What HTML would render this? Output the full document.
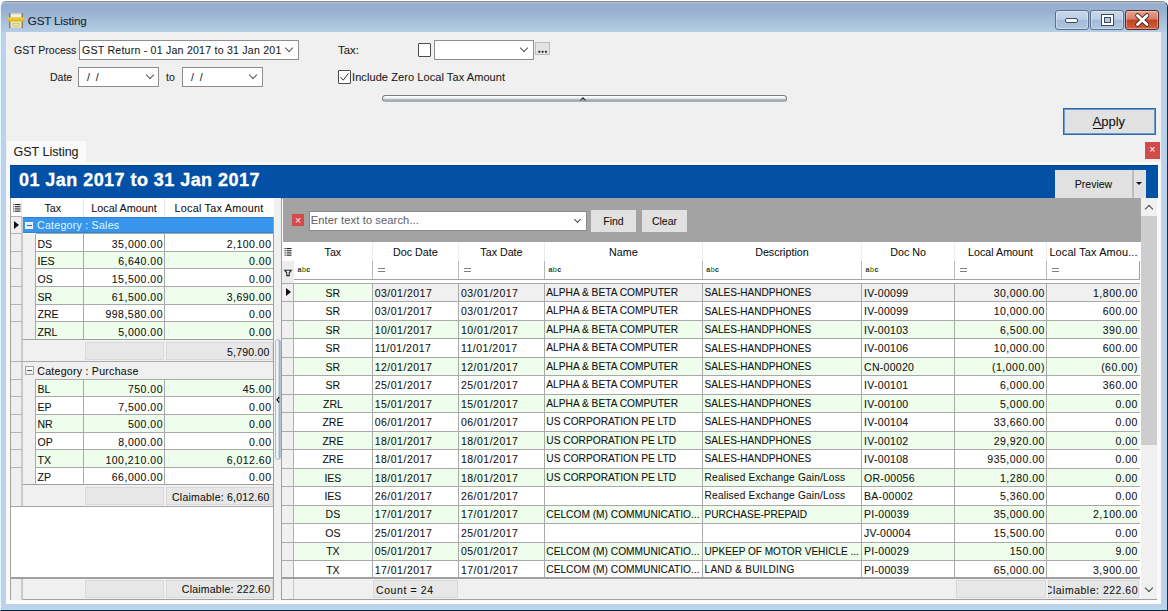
<!DOCTYPE html>
<html><head><meta charset="utf-8">
<style>
*{box-sizing:border-box;margin:0;padding:0}
html,body{width:1168px;height:611px;overflow:hidden;background:#fff}
body{position:relative;font-family:"Liberation Sans",sans-serif;font-size:10.5px;color:#1a1a1a}
.a{position:absolute}
.t{position:absolute;white-space:nowrap;line-height:1;-webkit-text-stroke:0.08px currentColor}
#frame{left:0;top:0.6px;width:1168px;height:610.4px;background:#bcd2ea;border-top:1.5px solid #868c94;border-right:1px solid #1c2c3c;border-bottom:1px solid #10202c;border-left:1px solid #e6f6ff;border-radius:6px 6px 0 0}
#title{left:1px;top:2px;width:1166px;height:30px;border-radius:5px 5px 0 0;background:linear-gradient(#b8c0d0 0px,#96aecd 2.5px,#9ab3d1 35%,#a6bdd8 60%,#b5cde5 100%)}
#client{left:6px;top:32px;width:1155px;height:571.5px;background:#f0f0f0}
.cb{position:absolute;background:#fff;border:1px solid #8e8e8e}
.chev{position:absolute;width:6px;height:6px;border-right:1px solid #555;border-bottom:1px solid #555;transform:rotate(45deg)}
.wb{position:absolute;top:10px;height:20px;border:1px solid #5a708e;border-radius:3px;background:linear-gradient(#c8d8ea 0%,#bcd0e6 45%,#a4bcd8 52%,#b0c6e0 100%);box-shadow:inset 0 0 0 1px rgba(255,255,255,0.35)}
</style></head><body>
<div id="frame" class="a"></div>
<div id="title" class="a"></div>
<!-- printer icon -->
<svg class="a" style="left:7px;top:12px" width="18" height="17" viewBox="0 0 18 17"><rect x="2" y="1" width="1.6" height="15" fill="#7c7c74"/><rect x="14.4" y="1" width="1.6" height="15" fill="#7c7c74"/><rect x="3.6" y="1.5" width="10.8" height="4" fill="#f6f2e0"/><rect x="3.6" y="1.5" width="10.8" height="0.8" fill="#c8c4b0"/><rect x="0.7" y="5.6" width="16.6" height="4" rx="1" fill="#e4b820"/><rect x="0.7" y="5.6" width="16.6" height="1.6" rx="0.8" fill="#f4d040"/><rect x="3.6" y="9.6" width="10.8" height="6" fill="#f2eab0"/><rect x="6" y="11.5" width="6" height="2.5" fill="none" stroke="#c8b860" stroke-width="0.8"/></svg>
<div class="t" style="left:27.8px;top:15.3px;font-size:11.6px;color:#142236;letter-spacing:-0.15px">GST Listing</div>
<!-- window buttons -->
<div class="wb" style="left:1055px;width:34px"><div class="a" style="left:9px;top:7px;width:13px;height:5px;background:#fff;border:1px solid #3a4a5e;border-radius:2px"></div></div>
<div class="wb" style="left:1090px;width:34px"><div class="a" style="left:10px;top:3px;width:13px;height:12px;background:#fff;border:1px solid #3a4a5e"></div><div class="a" style="left:13px;top:6px;width:7px;height:6px;background:#b7c9de;border:1px solid #3a4a5e"></div></div>
<div class="wb" style="left:1125px;width:34px;border-color:#5a2a20;background:linear-gradient(#eaa090 0%,#d8806a 45%,#c8401c 50%,#d06040 100%)"><svg class="a" style="left:0;top:0" width="33" height="19" viewBox="0 0 33 19"><path d="M11.5 4.5 L21 13.5 M21 4.5 L11.5 13.5" stroke="#4a2a24" stroke-width="4.6" stroke-linecap="round"/><path d="M11.5 4.5 L21 13.5 M21 4.5 L11.5 13.5" stroke="#fff" stroke-width="2.8" stroke-linecap="round"/></svg></div>

<div class="a" style="left:1px;top:607.6px;width:1166px;height:1.6px;background:#a8def4"></div><div id="client" class="a"></div><div class="a" style="left:6px;top:31.6px;width:1155px;height:1px;background:#eef4fa"></div>

<!-- top form -->
<div class="t" style="left:14px;top:45px">GST Process</div>
<div class="cb" style="left:79px;top:40px;width:220px;height:20px"><div class="t" style="left:2px;top:4px;font-size:10.6px;letter-spacing:0.22px">GST Return - 01 Jan 2017 to 31 Jan 201</div><div class="chev" style="left:206px;top:4px"></div></div>
<div class="t" style="left:50px;top:72px">Date</div>
<div class="cb" style="left:78px;top:67px;width:81px;height:20px"><div class="t" style="left:8px;top:4px">/ &nbsp;/</div><div class="chev" style="left:68px;top:4px"></div></div>
<div class="t" style="left:166px;top:72px">to</div>
<div class="cb" style="left:182px;top:67px;width:81px;height:20px"><div class="t" style="left:8px;top:4px">/ &nbsp;/</div><div class="chev" style="left:67px;top:4px"></div></div>

<div class="t" style="left:338px;top:44.5px;font-size:11.4px">Tax:</div>
<div class="a" style="left:417.5px;top:43px;width:13.5px;height:14px;background:#fff;border:1px solid #4c4c4c;border-radius:1px"></div>
<div class="cb" style="left:434px;top:40px;width:100px;height:20px"><div class="chev" style="left:86px;top:4px"></div></div>
<div class="a" style="left:535.2px;top:41.6px;width:15px;height:13.2px;background:#e3e3e3;border:1px solid #bdbdbd"><svg class="a" style="left:0;top:0" width="13" height="12" viewBox="0 0 13 12"><g fill="#111"><circle cx="3.3" cy="8.7" r="1.05"/><circle cx="6.6" cy="8.7" r="1.05"/><circle cx="9.9" cy="8.7" r="1.05"/></g></svg></div>

<div class="a" style="left:338px;top:70px;width:13px;height:13.5px;background:#fff;border:1px solid #4c4c4c;border-radius:1px"></div>
<svg class="a" style="left:338px;top:70px" width="13" height="14" viewBox="0 0 13 14"><path d="M2.6 7.2 L5.2 10.2 L10.4 3.4" fill="none" stroke="#333" stroke-width="1"/></svg>
<div class="t" style="left:352px;top:72px;font-size:11px;letter-spacing:0.08px">Include Zero Local Tax Amount</div>

<div class="a" style="left:381.5px;top:95px;width:405px;height:7px;border:1px solid #7c7c7c;border-bottom-color:#a4b0ba;border-radius:3.5px;background:linear-gradient(#ffffff 0%,#f2f6fa 40%,#b4c0ca 65%,#94a2ae 100%)"></div>
<div class="chev" style="left:581px;top:98px;width:4px;height:4px;transform:rotate(225deg);border-color:#222"></div>

<div class="a" style="left:1063px;top:108px;width:93px;height:27px;background:#e1e1e1;border:1px solid #2a68aa;box-shadow:inset 0 0 0 1px #6e9fd0"><div class="t" style="left:28.5px;top:6px;font-size:13px;color:#111">Apply</div><div class="a" style="left:28.5px;top:19px;width:9px;height:1px;background:#111"></div></div>

<div class="a" style="left:6.00px;top:162.00px;width:1155.00px;height:441.50px;background:#fafafa"></div>
<div class="a" style="left:7.00px;top:140.50px;width:79.00px;height:22.00px;background:#fafafa"></div>
<div class="t" style="top:146.22px;font-size:12.5px;color:#222;left:13.50px;">GST Listing</div>
<div class="a" style="left:1145.00px;top:142.00px;width:15.00px;height:17.00px;background:#d24a4a"></div>
<div class="t" style="top:145.34px;font-size:10px;color:#fff;left:952.50px;width:400px;text-align:center;">×</div>
<div class="a" style="left:10.00px;top:165.00px;width:1147.50px;height:33.00px;background:#0351a6;border-top:1px solid #02428c"></div>
<div class="t" style="top:171.06px;font-size:18px;color:#fff;left:19.00px;font-weight:bold;letter-spacing:0.45px;-webkit-text-stroke:0.35px #fff">01 Jan 2017 to 31 Jan 2017</div>
<div class="a" style="left:1054.70px;top:170.00px;width:77.50px;height:28.00px;background:#e1e1e1"></div>
<div class="a" style="left:1132.20px;top:170.00px;width:1.50px;height:28.00px;background:#bdbdbd"></div>
<div class="a" style="left:1133.70px;top:170.00px;width:12.30px;height:28.00px;background:#e1e1e1"></div>
<div class="t" style="top:179.11px;font-size:10.5px;color:#111;left:893.50px;width:400px;text-align:center;">Preview</div>
<div class="a" style="left:1136.2px;top:182.3px;width:0;height:0;border-left:3.6px solid transparent;border-right:3.6px solid transparent;border-top:3.8px solid #111"></div>
<div class="a" style="left:10.00px;top:198.00px;width:264.00px;height:402.00px;background:#fff;border:1px solid #a0a0a0;border-top:none"></div>
<div class="a" style="left:10.50px;top:198.00px;width:263.00px;height:18.60px;background:#fff"></div>
<div class="a" style="left:21.30px;top:198.00px;width:0.90px;height:18.60px;background:#e6e6e6"></div>
<div class="a" style="left:83.00px;top:198.00px;width:0.90px;height:18.60px;background:#e6e6e6"></div>
<div class="a" style="left:164.20px;top:198.00px;width:0.90px;height:18.60px;background:#e6e6e6"></div>
<div class="t" style="top:202.86px;font-size:10.8px;color:#111;left:-147.20px;width:400px;text-align:center;">Tax</div>
<div class="t" style="top:202.86px;font-size:10.8px;color:#111;left:-76.00px;width:400px;text-align:center;">Local Amount</div>
<div class="t" style="top:202.86px;font-size:10.8px;color:#111;left:19.00px;width:400px;text-align:center;letter-spacing:0.25px">Local Tax Amount</div>
<div class="a" style="left:10.60px;top:216.60px;width:11.00px;height:383.00px;background:#efefef"></div>
<div class="a" style="left:21.20px;top:216.60px;width:1.40px;height:383.00px;background:#c9c9c9"></div>
<svg class="a" style="left:12px;top:202px" width="10" height="11" viewBox="0 0 10 11"><g fill="#222"><rect x="1.2" y="2" width="1.2" height="1.1"/><rect x="3" y="2" width="5.5" height="1.1"/><rect x="1.2" y="4.2" width="1.2" height="1.1"/><rect x="3" y="4.2" width="5.5" height="1.1"/><rect x="1.2" y="6.4" width="1.2" height="1.1"/><rect x="3" y="6.4" width="5.5" height="1.1"/><rect x="1.2" y="8.6" width="1.2" height="1.1"/><rect x="3" y="8.6" width="5.5" height="1.1"/></g></svg>
<div class="a" style="left:22.60px;top:216.60px;width:250.40px;height:16.90px;background:#3995ec;border-top:1px solid #2f82d4;border-bottom:1px solid #2f82d4"></div>
<div class="a" style="left:25.20px;top:221.90px;width:8.20px;height:7.50px;background:#dcecfb;border:1px solid #f4faff"></div>
<div class="a" style="left:26.80px;top:225.20px;width:5.00px;height:1.10px;background:#4a6a8a"></div>
<div class="t" style="top:220.23px;font-size:10.6px;color:#d2f6ff;left:37.00px;letter-spacing:0.25px">Category : Sales</div>
<div class="a" style="left:10.60px;top:216.15px;width:11.00px;height:0.90px;background:#b4b4b4"></div>
<div class="a" style="left:22.60px;top:233.50px;width:13.00px;height:127.68px;background:#f0f0f0"></div>
<div class="a" style="left:35.50px;top:233.50px;width:237.50px;height:17.68px;background:#fff"></div>
<div class="a" style="left:35.50px;top:233.05px;width:237.50px;height:0.90px;background:#a9a9a9"></div>
<div class="a" style="left:10.60px;top:233.05px;width:11.00px;height:0.90px;background:#b4b4b4"></div>
<div class="t" style="top:238.51px;font-size:10.5px;color:#111;left:37.50px;">DS</div>
<div class="t" style="top:238.51px;font-size:10.5px;color:#111;right:1005.50px;letter-spacing:0.5px;margin-right:-0.5px">35,000.00</div>
<div class="t" style="top:238.51px;font-size:10.5px;color:#111;right:897.00px;letter-spacing:0.5px;margin-right:-0.5px">2,100.00</div>
<div class="a" style="left:35.50px;top:251.18px;width:237.50px;height:17.68px;background:#eefdec"></div>
<div class="a" style="left:35.50px;top:250.73px;width:237.50px;height:0.90px;background:#a9a9a9"></div>
<div class="a" style="left:10.60px;top:250.73px;width:11.00px;height:0.90px;background:#b4b4b4"></div>
<div class="t" style="top:256.19px;font-size:10.5px;color:#111;left:37.50px;">IES</div>
<div class="t" style="top:256.19px;font-size:10.5px;color:#111;right:1005.50px;letter-spacing:0.5px;margin-right:-0.5px">6,640.00</div>
<div class="t" style="top:256.19px;font-size:10.5px;color:#111;right:897.00px;letter-spacing:0.5px;margin-right:-0.5px">0.00</div>
<div class="a" style="left:35.50px;top:268.86px;width:237.50px;height:17.68px;background:#fff"></div>
<div class="a" style="left:35.50px;top:268.41px;width:237.50px;height:0.90px;background:#a9a9a9"></div>
<div class="a" style="left:10.60px;top:268.41px;width:11.00px;height:0.90px;background:#b4b4b4"></div>
<div class="t" style="top:273.87px;font-size:10.5px;color:#111;left:37.50px;">OS</div>
<div class="t" style="top:273.87px;font-size:10.5px;color:#111;right:1005.50px;letter-spacing:0.5px;margin-right:-0.5px">15,500.00</div>
<div class="t" style="top:273.87px;font-size:10.5px;color:#111;right:897.00px;letter-spacing:0.5px;margin-right:-0.5px">0.00</div>
<div class="a" style="left:35.50px;top:286.54px;width:237.50px;height:17.68px;background:#eefdec"></div>
<div class="a" style="left:35.50px;top:286.09px;width:237.50px;height:0.90px;background:#a9a9a9"></div>
<div class="a" style="left:10.60px;top:286.09px;width:11.00px;height:0.90px;background:#b4b4b4"></div>
<div class="t" style="top:291.55px;font-size:10.5px;color:#111;left:37.50px;">SR</div>
<div class="t" style="top:291.55px;font-size:10.5px;color:#111;right:1005.50px;letter-spacing:0.5px;margin-right:-0.5px">61,500.00</div>
<div class="t" style="top:291.55px;font-size:10.5px;color:#111;right:897.00px;letter-spacing:0.5px;margin-right:-0.5px">3,690.00</div>
<div class="a" style="left:35.50px;top:304.22px;width:237.50px;height:17.68px;background:#fff"></div>
<div class="a" style="left:35.50px;top:303.77px;width:237.50px;height:0.90px;background:#a9a9a9"></div>
<div class="a" style="left:10.60px;top:303.77px;width:11.00px;height:0.90px;background:#b4b4b4"></div>
<div class="t" style="top:309.23px;font-size:10.5px;color:#111;left:37.50px;">ZRE</div>
<div class="t" style="top:309.23px;font-size:10.5px;color:#111;right:1005.50px;letter-spacing:0.5px;margin-right:-0.5px">998,580.00</div>
<div class="t" style="top:309.23px;font-size:10.5px;color:#111;right:897.00px;letter-spacing:0.5px;margin-right:-0.5px">0.00</div>
<div class="a" style="left:35.50px;top:321.90px;width:237.50px;height:17.68px;background:#eefdec"></div>
<div class="a" style="left:35.50px;top:321.45px;width:237.50px;height:0.90px;background:#a9a9a9"></div>
<div class="a" style="left:10.60px;top:321.45px;width:11.00px;height:0.90px;background:#b4b4b4"></div>
<div class="t" style="top:326.91px;font-size:10.5px;color:#111;left:37.50px;">ZRL</div>
<div class="t" style="top:326.91px;font-size:10.5px;color:#111;right:1005.50px;letter-spacing:0.5px;margin-right:-0.5px">5,000.00</div>
<div class="t" style="top:326.91px;font-size:10.5px;color:#111;right:897.00px;letter-spacing:0.5px;margin-right:-0.5px">0.00</div>
<div class="a" style="left:35.10px;top:233.50px;width:0.90px;height:106.08px;background:#a9a9a9"></div>
<div class="a" style="left:83.00px;top:233.50px;width:0.90px;height:106.08px;background:#a9a9a9"></div>
<div class="a" style="left:164.10px;top:233.50px;width:0.90px;height:106.08px;background:#a9a9a9"></div>
<div class="a" style="left:22.60px;top:339.08px;width:250.40px;height:1.10px;background:#a0a0a0"></div>
<div class="a" style="left:22.60px;top:340.18px;width:250.40px;height:21.00px;background:#f0f0f0"></div>
<div class="a" style="left:85.00px;top:341.78px;width:79.00px;height:18.40px;background:#e7e7e8;border:1px solid #d9d9d9"></div>
<div class="a" style="left:166.00px;top:341.78px;width:106.50px;height:18.40px;background:#e7e7e8;border:1px solid #d9d9d9"></div>
<div class="t" style="top:346.59px;font-size:10.5px;color:#111;right:898.60px;letter-spacing:0.22px;margin-right:-0.22px">5,790.00</div>
<div class="a" style="left:10.60px;top:360.68px;width:262.40px;height:1.00px;background:#a9a9a9"></div>
<div class="a" style="left:22.60px;top:361.68px;width:250.40px;height:17.50px;background:#f0f0f0"></div>
<div class="a" style="left:25.10px;top:366.18px;width:8.60px;height:8.40px;background:linear-gradient(#ffffff,#e8e8e8);border:1px solid #a4a4a4"></div>
<div class="a" style="left:27.00px;top:369.88px;width:4.80px;height:1.10px;background:#555"></div>
<div class="t" style="top:365.51px;font-size:10.6px;color:#111;left:37.30px;letter-spacing:0.25px">Category : Purchase</div>
<div class="a" style="left:10.60px;top:360.73px;width:11.00px;height:0.90px;background:#b4b4b4"></div>
<div class="a" style="left:22.60px;top:379.18px;width:13.00px;height:127.20px;background:#f0f0f0"></div>
<div class="a" style="left:35.50px;top:379.18px;width:237.50px;height:17.60px;background:#eefdec"></div>
<div class="a" style="left:35.50px;top:378.73px;width:237.50px;height:0.90px;background:#a9a9a9"></div>
<div class="a" style="left:10.60px;top:378.73px;width:11.00px;height:0.90px;background:#b4b4b4"></div>
<div class="t" style="top:384.19px;font-size:10.5px;color:#111;left:37.50px;">BL</div>
<div class="t" style="top:384.19px;font-size:10.5px;color:#111;right:1005.50px;letter-spacing:0.5px;margin-right:-0.5px">750.00</div>
<div class="t" style="top:384.19px;font-size:10.5px;color:#111;right:897.00px;letter-spacing:0.5px;margin-right:-0.5px">45.00</div>
<div class="a" style="left:35.50px;top:396.78px;width:237.50px;height:17.60px;background:#fff"></div>
<div class="a" style="left:35.50px;top:396.33px;width:237.50px;height:0.90px;background:#a9a9a9"></div>
<div class="a" style="left:10.60px;top:396.33px;width:11.00px;height:0.90px;background:#b4b4b4"></div>
<div class="t" style="top:401.79px;font-size:10.5px;color:#111;left:37.50px;">EP</div>
<div class="t" style="top:401.79px;font-size:10.5px;color:#111;right:1005.50px;letter-spacing:0.5px;margin-right:-0.5px">7,500.00</div>
<div class="t" style="top:401.79px;font-size:10.5px;color:#111;right:897.00px;letter-spacing:0.5px;margin-right:-0.5px">0.00</div>
<div class="a" style="left:35.50px;top:414.38px;width:237.50px;height:17.60px;background:#eefdec"></div>
<div class="a" style="left:35.50px;top:413.93px;width:237.50px;height:0.90px;background:#a9a9a9"></div>
<div class="a" style="left:10.60px;top:413.93px;width:11.00px;height:0.90px;background:#b4b4b4"></div>
<div class="t" style="top:419.39px;font-size:10.5px;color:#111;left:37.50px;">NR</div>
<div class="t" style="top:419.39px;font-size:10.5px;color:#111;right:1005.50px;letter-spacing:0.5px;margin-right:-0.5px">500.00</div>
<div class="t" style="top:419.39px;font-size:10.5px;color:#111;right:897.00px;letter-spacing:0.5px;margin-right:-0.5px">0.00</div>
<div class="a" style="left:35.50px;top:431.98px;width:237.50px;height:17.60px;background:#fff"></div>
<div class="a" style="left:35.50px;top:431.53px;width:237.50px;height:0.90px;background:#a9a9a9"></div>
<div class="a" style="left:10.60px;top:431.53px;width:11.00px;height:0.90px;background:#b4b4b4"></div>
<div class="t" style="top:436.99px;font-size:10.5px;color:#111;left:37.50px;">OP</div>
<div class="t" style="top:436.99px;font-size:10.5px;color:#111;right:1005.50px;letter-spacing:0.5px;margin-right:-0.5px">8,000.00</div>
<div class="t" style="top:436.99px;font-size:10.5px;color:#111;right:897.00px;letter-spacing:0.5px;margin-right:-0.5px">0.00</div>
<div class="a" style="left:35.50px;top:449.58px;width:237.50px;height:17.60px;background:#eefdec"></div>
<div class="a" style="left:35.50px;top:449.13px;width:237.50px;height:0.90px;background:#a9a9a9"></div>
<div class="a" style="left:10.60px;top:449.13px;width:11.00px;height:0.90px;background:#b4b4b4"></div>
<div class="t" style="top:454.59px;font-size:10.5px;color:#111;left:37.50px;">TX</div>
<div class="t" style="top:454.59px;font-size:10.5px;color:#111;right:1005.50px;letter-spacing:0.5px;margin-right:-0.5px">100,210.00</div>
<div class="t" style="top:454.59px;font-size:10.5px;color:#111;right:897.00px;letter-spacing:0.5px;margin-right:-0.5px">6,012.60</div>
<div class="a" style="left:35.50px;top:467.18px;width:237.50px;height:17.60px;background:#fff"></div>
<div class="a" style="left:35.50px;top:466.73px;width:237.50px;height:0.90px;background:#a9a9a9"></div>
<div class="a" style="left:10.60px;top:466.73px;width:11.00px;height:0.90px;background:#b4b4b4"></div>
<div class="t" style="top:472.19px;font-size:10.5px;color:#111;left:37.50px;">ZP</div>
<div class="t" style="top:472.19px;font-size:10.5px;color:#111;right:1005.50px;letter-spacing:0.5px;margin-right:-0.5px">66,000.00</div>
<div class="t" style="top:472.19px;font-size:10.5px;color:#111;right:897.00px;letter-spacing:0.5px;margin-right:-0.5px">0.00</div>
<div class="a" style="left:35.10px;top:379.18px;width:0.90px;height:105.60px;background:#a9a9a9"></div>
<div class="a" style="left:83.00px;top:379.18px;width:0.90px;height:105.60px;background:#a9a9a9"></div>
<div class="a" style="left:164.10px;top:379.18px;width:0.90px;height:105.60px;background:#a9a9a9"></div>
<div class="a" style="left:22.60px;top:484.28px;width:250.40px;height:1.10px;background:#a0a0a0"></div>
<div class="a" style="left:22.60px;top:485.38px;width:250.40px;height:21.00px;background:#f0f0f0"></div>
<div class="a" style="left:85.00px;top:486.98px;width:79.00px;height:18.40px;background:#e7e7e8;border:1px solid #d9d9d9"></div>
<div class="a" style="left:166.00px;top:486.98px;width:106.50px;height:18.40px;background:#e7e7e8;border:1px solid #d9d9d9"></div>
<div class="t" style="top:491.79px;font-size:10.5px;color:#111;right:898.60px;letter-spacing:0.22px;margin-right:-0.22px">Claimable: 6,012.60</div>
<div class="a" style="left:10.60px;top:505.88px;width:262.80px;height:1.00px;background:#a8a8a8"></div>
<div class="a" style="left:10.60px;top:506.88px;width:262.80px;height:70.52px;background:#fff"></div>
<div class="a" style="left:10.60px;top:577.40px;width:262.80px;height:1.20px;background:#a0a0a0"></div>
<div class="a" style="left:10.60px;top:578.60px;width:262.80px;height:20.50px;background:#f0f0f0"></div>
<div class="a" style="left:21.20px;top:578.60px;width:1.40px;height:20.50px;background:#c9c9c9"></div>
<div class="a" style="left:85.00px;top:580.20px;width:79.00px;height:17.80px;background:#e7e7e8;border:1px solid #d9d9d9"></div>
<div class="a" style="left:166.00px;top:580.20px;width:106.50px;height:17.80px;background:#e7e7e8;border:1px solid #d9d9d9"></div>
<div class="t" style="top:584.41px;font-size:10.5px;color:#111;right:898.00px;letter-spacing:0.22px;margin-right:-0.22px">Claimable: 222.60</div>
<div class="a" style="left:13.6px;top:221.3px;width:0;height:0;border-top:4.2px solid transparent;border-bottom:4.2px solid transparent;border-left:5px solid #111"></div>
<div class="a" style="left:274.00px;top:198.00px;width:8.00px;height:402.00px;background:#f0f0f0"></div>
<div class="a" style="left:275.40px;top:338.80px;width:5.80px;height:121.20px;background:linear-gradient(90deg,#e6ecf2 0%,#f6f8fb 35%,#c4d0dc 70%,#8c9cae 100%);border-radius:3px;border:0.6px solid #b4c0cc"></div>
<svg class="a" style="left:274px;top:394px" width="8" height="12" viewBox="0 0 8 12"><path d="M5.2 3.2 L3 5.8 L5.2 8.4" fill="none" stroke="#111" stroke-width="1.3"/></svg>
<div class="a" style="left:281.20px;top:198.00px;width:876.30px;height:402.00px;background:#fff;border:1px solid #a0a0a0"></div>
<div class="a" style="left:283.00px;top:198.00px;width:857.50px;height:44.40px;background:#a3a3a3"></div>
<div class="a" style="left:292.20px;top:214.40px;width:11.60px;height:12.10px;background:#d34b4b"></div>
<div class="t" style="top:215.41px;font-size:10.5px;color:#f4e8e8;left:98.00px;width:400px;text-align:center;">×</div>
<div class="a" style="left:308.50px;top:210.50px;width:278.00px;height:20.00px;background:#fff;border:1px solid #8a8a8a"></div>
<div class="t" style="top:215.40px;font-size:11.1px;color:#666;left:310.80px;letter-spacing:0.12px">Enter text to search...</div>
<div class="chev" style="left:575px;top:216.5px;width:5px;height:5px;border-color:#444"></div>
<div class="a" style="left:591.00px;top:209.80px;width:44.80px;height:22.20px;background:#e1e1e1"></div>
<div class="t" style="top:215.61px;font-size:10.5px;color:#111;left:413.50px;width:400px;text-align:center;">Find</div>
<div class="a" style="left:642.00px;top:209.80px;width:45.20px;height:22.20px;background:#e1e1e1"></div>
<div class="t" style="top:215.61px;font-size:10.5px;color:#111;left:464.50px;width:400px;text-align:center;">Clear</div>
<div class="a" style="left:1140.50px;top:198.00px;width:16.50px;height:401.00px;background:#f0f0f0"></div>
<div class="a" style="left:1141.00px;top:215.50px;width:15.50px;height:229.50px;background:#cdcdcd"></div>
<div class="chev" style="left:1146px;top:206px;width:6px;height:6px;transform:rotate(225deg);border-color:#444"></div>
<div class="chev" style="left:1146px;top:585px;width:6px;height:6px;border-color:#444"></div>
<div class="a" style="left:282.00px;top:242.40px;width:11.50px;height:357.00px;background:#f0f0f0"></div>
<div class="a" style="left:293.50px;top:242.40px;width:846.30px;height:36.60px;background:#fff"></div>
<div class="a" style="left:1139.20px;top:261.40px;width:1.00px;height:17.60px;background:#a0a0a0"></div>
<div class="a" style="left:371.90px;top:242.40px;width:0.80px;height:19.00px;background:#ececec"></div>
<div class="a" style="left:371.90px;top:261.40px;width:1.00px;height:17.60px;background:#b8b8b8"></div>
<div class="a" style="left:458.10px;top:242.40px;width:0.80px;height:19.00px;background:#ececec"></div>
<div class="a" style="left:458.10px;top:261.40px;width:1.00px;height:17.60px;background:#b8b8b8"></div>
<div class="a" style="left:544.00px;top:242.40px;width:0.80px;height:19.00px;background:#ececec"></div>
<div class="a" style="left:544.00px;top:261.40px;width:1.00px;height:17.60px;background:#b8b8b8"></div>
<div class="a" style="left:701.90px;top:242.40px;width:0.80px;height:19.00px;background:#ececec"></div>
<div class="a" style="left:701.90px;top:261.40px;width:1.00px;height:17.60px;background:#b8b8b8"></div>
<div class="a" style="left:861.20px;top:242.40px;width:0.80px;height:19.00px;background:#ececec"></div>
<div class="a" style="left:861.20px;top:261.40px;width:1.00px;height:17.60px;background:#b8b8b8"></div>
<div class="a" style="left:954.20px;top:242.40px;width:0.80px;height:19.00px;background:#ececec"></div>
<div class="a" style="left:954.20px;top:261.40px;width:1.00px;height:17.60px;background:#b8b8b8"></div>
<div class="a" style="left:1046.00px;top:242.40px;width:0.80px;height:19.00px;background:#ececec"></div>
<div class="a" style="left:1046.00px;top:261.40px;width:1.00px;height:17.60px;background:#b8b8b8"></div>
<div class="a" style="left:293.10px;top:242.40px;width:0.80px;height:36.60px;background:#e6e6e6"></div>
<div class="t" style="top:247.24px;font-size:10.7px;color:#111;left:132.90px;width:400px;text-align:center;">Tax</div>
<div class="t" style="top:247.24px;font-size:10.7px;color:#111;left:215.40px;width:400px;text-align:center;">Doc Date</div>
<div class="t" style="top:247.24px;font-size:10.7px;color:#111;left:301.45px;width:400px;text-align:center;">Tax Date</div>
<div class="t" style="top:247.24px;font-size:10.7px;color:#111;left:423.35px;width:400px;text-align:center;">Name</div>
<div class="t" style="top:247.24px;font-size:10.7px;color:#111;left:581.95px;width:400px;text-align:center;">Description</div>
<div class="t" style="top:247.24px;font-size:10.7px;color:#111;left:708.10px;width:400px;text-align:center;">Doc No</div>
<div class="t" style="top:247.24px;font-size:10.7px;color:#111;left:800.50px;width:400px;text-align:center;">Local Amount</div>
<div class="t" style="top:247.07px;font-size:10.9px;color:#111;left:1049.40px;letter-spacing:0.15px">Local Tax Amou...</div>
<div class="t" style="top:265.71px;font-size:7.2px;color:#333;left:297.50px;font-weight:bold;letter-spacing:0.2px;-webkit-text-stroke:0"><span style="color:#3c3c3c">a</span><span style="color:#4e9a30">b</span><span style="color:#2c2c2c">c</span></div>
<div class="a" style="left:377.80px;top:267.60px;width:7.20px;height:1.10px;background:#808080"></div>
<div class="a" style="left:377.80px;top:270.60px;width:7.20px;height:1.10px;background:#808080"></div>
<div class="a" style="left:464.00px;top:267.60px;width:7.20px;height:1.10px;background:#808080"></div>
<div class="a" style="left:464.00px;top:270.60px;width:7.20px;height:1.10px;background:#808080"></div>
<div class="t" style="top:265.71px;font-size:7.2px;color:#333;left:548.40px;font-weight:bold;letter-spacing:0.2px;-webkit-text-stroke:0"><span style="color:#3c3c3c">a</span><span style="color:#4e9a30">b</span><span style="color:#2c2c2c">c</span></div>
<div class="t" style="top:265.71px;font-size:7.2px;color:#333;left:706.30px;font-weight:bold;letter-spacing:0.2px;-webkit-text-stroke:0"><span style="color:#3c3c3c">a</span><span style="color:#4e9a30">b</span><span style="color:#2c2c2c">c</span></div>
<div class="t" style="top:265.71px;font-size:7.2px;color:#333;left:865.60px;font-weight:bold;letter-spacing:0.2px;-webkit-text-stroke:0"><span style="color:#3c3c3c">a</span><span style="color:#4e9a30">b</span><span style="color:#2c2c2c">c</span></div>
<div class="a" style="left:960.10px;top:267.60px;width:7.20px;height:1.10px;background:#808080"></div>
<div class="a" style="left:960.10px;top:270.60px;width:7.20px;height:1.10px;background:#808080"></div>
<div class="a" style="left:1051.90px;top:267.60px;width:7.20px;height:1.10px;background:#808080"></div>
<div class="a" style="left:1051.90px;top:270.60px;width:7.20px;height:1.10px;background:#808080"></div>
<div class="a" style="left:282.00px;top:242.40px;width:11.50px;height:19.00px;background:#fff"></div>
<div class="a" style="left:282.00px;top:261.40px;width:11.50px;height:21.60px;background:#ececec"></div>
<svg class="a" style="left:283px;top:246px" width="10" height="11" viewBox="0 0 10 11"><g fill="#222"><rect x="1.5" y="2" width="1.2" height="1.1"/><rect x="3.5" y="2" width="5" height="1.1"/><rect x="1.5" y="4.2" width="1.2" height="1.1"/><rect x="3.5" y="4.2" width="5" height="1.1"/><rect x="1.5" y="6.4" width="1.2" height="1.1"/><rect x="3.5" y="6.4" width="5" height="1.1"/><rect x="1.5" y="8.6" width="1.2" height="1.1"/><rect x="3.5" y="8.6" width="5" height="1.1"/></g></svg>
<svg class="a" style="left:283px;top:268px" width="10" height="10" viewBox="0 0 10 10"><path d="M1.8 2.2 H8.2 L6.2 4.8 V7.6 H3.8 V4.8 Z" fill="#fff" stroke="#222" stroke-width="1.1"/></svg>
<div class="a" style="left:293.50px;top:278.80px;width:846.30px;height:1.10px;background:#a4a4a4"></div>
<div class="a" style="left:293.50px;top:279.90px;width:846.30px;height:3.10px;background:#fff"></div>
<div class="a" style="left:293.50px;top:283.00px;width:846.30px;height:18.48px;background:#eefdec"></div>
<div class="a" style="left:372.30px;top:283.00px;width:767.50px;height:18.48px;background:#f0f0f0"></div>
<div class="a" style="left:282.00px;top:283.00px;width:857.80px;height:0.90px;background:#a9a9a9"></div>
<div class="a" style="left:371.85px;top:283.00px;width:0.90px;height:18.48px;background:#a9a9a9"></div>
<div class="a" style="left:458.05px;top:283.00px;width:0.90px;height:18.48px;background:#a9a9a9"></div>
<div class="a" style="left:543.95px;top:283.00px;width:0.90px;height:18.48px;background:#a9a9a9"></div>
<div class="a" style="left:701.85px;top:283.00px;width:0.90px;height:18.48px;background:#a9a9a9"></div>
<div class="a" style="left:861.15px;top:283.00px;width:0.90px;height:18.48px;background:#a9a9a9"></div>
<div class="a" style="left:954.15px;top:283.00px;width:0.90px;height:18.48px;background:#a9a9a9"></div>
<div class="a" style="left:1045.95px;top:283.00px;width:0.90px;height:18.48px;background:#a9a9a9"></div>
<div class="t" style="top:287.71px;font-size:10.5px;color:#111;left:132.90px;width:400px;text-align:center;">SR</div>
<div class="t" style="top:287.71px;font-size:10.5px;color:#111;left:374.70px;letter-spacing:0.5px;margin-right:-0.5px">03/01/2017</div>
<div class="t" style="top:287.71px;font-size:10.5px;color:#111;left:460.90px;letter-spacing:0.5px;margin-right:-0.5px">03/01/2017</div>
<div class="t" style="top:287.97px;font-size:10.2px;color:#111;left:546.30px;">ALPHA &amp; BETA COMPUTER</div>
<div class="t" style="top:288.09px;font-size:10.05px;color:#111;left:704.60px;">SALES-HANDPHONES</div>
<div class="t" style="top:287.71px;font-size:10.5px;color:#111;left:864.00px;letter-spacing:0.3px">IV-00099</div>
<div class="t" style="top:287.71px;font-size:10.5px;color:#111;right:123.60px;letter-spacing:0.5px;margin-right:-0.5px">30,000.00</div>
<div class="t" style="top:287.71px;font-size:10.5px;color:#111;right:30.60px;letter-spacing:0.5px;margin-right:-0.5px">1,800.00</div>
<div class="a" style="left:293.50px;top:301.48px;width:846.30px;height:18.48px;background:#fff"></div>
<div class="a" style="left:282.00px;top:301.48px;width:857.80px;height:0.90px;background:#a9a9a9"></div>
<div class="a" style="left:371.85px;top:301.48px;width:0.90px;height:18.48px;background:#a9a9a9"></div>
<div class="a" style="left:458.05px;top:301.48px;width:0.90px;height:18.48px;background:#a9a9a9"></div>
<div class="a" style="left:543.95px;top:301.48px;width:0.90px;height:18.48px;background:#a9a9a9"></div>
<div class="a" style="left:701.85px;top:301.48px;width:0.90px;height:18.48px;background:#a9a9a9"></div>
<div class="a" style="left:861.15px;top:301.48px;width:0.90px;height:18.48px;background:#a9a9a9"></div>
<div class="a" style="left:954.15px;top:301.48px;width:0.90px;height:18.48px;background:#a9a9a9"></div>
<div class="a" style="left:1045.95px;top:301.48px;width:0.90px;height:18.48px;background:#a9a9a9"></div>
<div class="t" style="top:306.19px;font-size:10.5px;color:#111;left:132.90px;width:400px;text-align:center;">SR</div>
<div class="t" style="top:306.19px;font-size:10.5px;color:#111;left:374.70px;letter-spacing:0.5px;margin-right:-0.5px">03/01/2017</div>
<div class="t" style="top:306.19px;font-size:10.5px;color:#111;left:460.90px;letter-spacing:0.5px;margin-right:-0.5px">03/01/2017</div>
<div class="t" style="top:306.45px;font-size:10.2px;color:#111;left:546.30px;">ALPHA &amp; BETA COMPUTER</div>
<div class="t" style="top:306.57px;font-size:10.05px;color:#111;left:704.60px;">SALES-HANDPHONES</div>
<div class="t" style="top:306.19px;font-size:10.5px;color:#111;left:864.00px;letter-spacing:0.3px">IV-00099</div>
<div class="t" style="top:306.19px;font-size:10.5px;color:#111;right:123.60px;letter-spacing:0.5px;margin-right:-0.5px">10,000.00</div>
<div class="t" style="top:306.19px;font-size:10.5px;color:#111;right:30.60px;letter-spacing:0.5px;margin-right:-0.5px">600.00</div>
<div class="a" style="left:293.50px;top:319.96px;width:846.30px;height:18.48px;background:#eefdec"></div>
<div class="a" style="left:282.00px;top:319.96px;width:857.80px;height:0.90px;background:#a9a9a9"></div>
<div class="a" style="left:371.85px;top:319.96px;width:0.90px;height:18.48px;background:#a9a9a9"></div>
<div class="a" style="left:458.05px;top:319.96px;width:0.90px;height:18.48px;background:#a9a9a9"></div>
<div class="a" style="left:543.95px;top:319.96px;width:0.90px;height:18.48px;background:#a9a9a9"></div>
<div class="a" style="left:701.85px;top:319.96px;width:0.90px;height:18.48px;background:#a9a9a9"></div>
<div class="a" style="left:861.15px;top:319.96px;width:0.90px;height:18.48px;background:#a9a9a9"></div>
<div class="a" style="left:954.15px;top:319.96px;width:0.90px;height:18.48px;background:#a9a9a9"></div>
<div class="a" style="left:1045.95px;top:319.96px;width:0.90px;height:18.48px;background:#a9a9a9"></div>
<div class="t" style="top:324.67px;font-size:10.5px;color:#111;left:132.90px;width:400px;text-align:center;">SR</div>
<div class="t" style="top:324.67px;font-size:10.5px;color:#111;left:374.70px;letter-spacing:0.5px;margin-right:-0.5px">10/01/2017</div>
<div class="t" style="top:324.67px;font-size:10.5px;color:#111;left:460.90px;letter-spacing:0.5px;margin-right:-0.5px">10/01/2017</div>
<div class="t" style="top:324.93px;font-size:10.2px;color:#111;left:546.30px;">ALPHA &amp; BETA COMPUTER</div>
<div class="t" style="top:325.05px;font-size:10.05px;color:#111;left:704.60px;">SALES-HANDPHONES</div>
<div class="t" style="top:324.67px;font-size:10.5px;color:#111;left:864.00px;letter-spacing:0.3px">IV-00103</div>
<div class="t" style="top:324.67px;font-size:10.5px;color:#111;right:123.60px;letter-spacing:0.5px;margin-right:-0.5px">6,500.00</div>
<div class="t" style="top:324.67px;font-size:10.5px;color:#111;right:30.60px;letter-spacing:0.5px;margin-right:-0.5px">390.00</div>
<div class="a" style="left:293.50px;top:338.44px;width:846.30px;height:18.48px;background:#fff"></div>
<div class="a" style="left:282.00px;top:338.44px;width:857.80px;height:0.90px;background:#a9a9a9"></div>
<div class="a" style="left:371.85px;top:338.44px;width:0.90px;height:18.48px;background:#a9a9a9"></div>
<div class="a" style="left:458.05px;top:338.44px;width:0.90px;height:18.48px;background:#a9a9a9"></div>
<div class="a" style="left:543.95px;top:338.44px;width:0.90px;height:18.48px;background:#a9a9a9"></div>
<div class="a" style="left:701.85px;top:338.44px;width:0.90px;height:18.48px;background:#a9a9a9"></div>
<div class="a" style="left:861.15px;top:338.44px;width:0.90px;height:18.48px;background:#a9a9a9"></div>
<div class="a" style="left:954.15px;top:338.44px;width:0.90px;height:18.48px;background:#a9a9a9"></div>
<div class="a" style="left:1045.95px;top:338.44px;width:0.90px;height:18.48px;background:#a9a9a9"></div>
<div class="t" style="top:343.15px;font-size:10.5px;color:#111;left:132.90px;width:400px;text-align:center;">SR</div>
<div class="t" style="top:343.15px;font-size:10.5px;color:#111;left:374.70px;letter-spacing:0.5px;margin-right:-0.5px">11/01/2017</div>
<div class="t" style="top:343.15px;font-size:10.5px;color:#111;left:460.90px;letter-spacing:0.5px;margin-right:-0.5px">11/01/2017</div>
<div class="t" style="top:343.41px;font-size:10.2px;color:#111;left:546.30px;">ALPHA &amp; BETA COMPUTER</div>
<div class="t" style="top:343.53px;font-size:10.05px;color:#111;left:704.60px;">SALES-HANDPHONES</div>
<div class="t" style="top:343.15px;font-size:10.5px;color:#111;left:864.00px;letter-spacing:0.3px">IV-00106</div>
<div class="t" style="top:343.15px;font-size:10.5px;color:#111;right:123.60px;letter-spacing:0.5px;margin-right:-0.5px">10,000.00</div>
<div class="t" style="top:343.15px;font-size:10.5px;color:#111;right:30.60px;letter-spacing:0.5px;margin-right:-0.5px">600.00</div>
<div class="a" style="left:293.50px;top:356.92px;width:846.30px;height:18.48px;background:#eefdec"></div>
<div class="a" style="left:282.00px;top:356.92px;width:857.80px;height:0.90px;background:#a9a9a9"></div>
<div class="a" style="left:371.85px;top:356.92px;width:0.90px;height:18.48px;background:#a9a9a9"></div>
<div class="a" style="left:458.05px;top:356.92px;width:0.90px;height:18.48px;background:#a9a9a9"></div>
<div class="a" style="left:543.95px;top:356.92px;width:0.90px;height:18.48px;background:#a9a9a9"></div>
<div class="a" style="left:701.85px;top:356.92px;width:0.90px;height:18.48px;background:#a9a9a9"></div>
<div class="a" style="left:861.15px;top:356.92px;width:0.90px;height:18.48px;background:#a9a9a9"></div>
<div class="a" style="left:954.15px;top:356.92px;width:0.90px;height:18.48px;background:#a9a9a9"></div>
<div class="a" style="left:1045.95px;top:356.92px;width:0.90px;height:18.48px;background:#a9a9a9"></div>
<div class="t" style="top:361.63px;font-size:10.5px;color:#111;left:132.90px;width:400px;text-align:center;">SR</div>
<div class="t" style="top:361.63px;font-size:10.5px;color:#111;left:374.70px;letter-spacing:0.5px;margin-right:-0.5px">12/01/2017</div>
<div class="t" style="top:361.63px;font-size:10.5px;color:#111;left:460.90px;letter-spacing:0.5px;margin-right:-0.5px">12/01/2017</div>
<div class="t" style="top:361.89px;font-size:10.2px;color:#111;left:546.30px;">ALPHA &amp; BETA COMPUTER</div>
<div class="t" style="top:362.01px;font-size:10.05px;color:#111;left:704.60px;">SALES-HANDPHONES</div>
<div class="t" style="top:361.63px;font-size:10.5px;color:#111;left:864.00px;letter-spacing:0.3px">CN-00020</div>
<div class="t" style="top:361.63px;font-size:10.5px;color:#111;right:123.60px;letter-spacing:0.5px;margin-right:-0.5px">(1,000.00)</div>
<div class="t" style="top:361.63px;font-size:10.5px;color:#111;right:30.60px;letter-spacing:0.5px;margin-right:-0.5px">(60.00)</div>
<div class="a" style="left:293.50px;top:375.40px;width:846.30px;height:18.48px;background:#fff"></div>
<div class="a" style="left:282.00px;top:375.40px;width:857.80px;height:0.90px;background:#a9a9a9"></div>
<div class="a" style="left:371.85px;top:375.40px;width:0.90px;height:18.48px;background:#a9a9a9"></div>
<div class="a" style="left:458.05px;top:375.40px;width:0.90px;height:18.48px;background:#a9a9a9"></div>
<div class="a" style="left:543.95px;top:375.40px;width:0.90px;height:18.48px;background:#a9a9a9"></div>
<div class="a" style="left:701.85px;top:375.40px;width:0.90px;height:18.48px;background:#a9a9a9"></div>
<div class="a" style="left:861.15px;top:375.40px;width:0.90px;height:18.48px;background:#a9a9a9"></div>
<div class="a" style="left:954.15px;top:375.40px;width:0.90px;height:18.48px;background:#a9a9a9"></div>
<div class="a" style="left:1045.95px;top:375.40px;width:0.90px;height:18.48px;background:#a9a9a9"></div>
<div class="t" style="top:380.11px;font-size:10.5px;color:#111;left:132.90px;width:400px;text-align:center;">SR</div>
<div class="t" style="top:380.11px;font-size:10.5px;color:#111;left:374.70px;letter-spacing:0.5px;margin-right:-0.5px">25/01/2017</div>
<div class="t" style="top:380.11px;font-size:10.5px;color:#111;left:460.90px;letter-spacing:0.5px;margin-right:-0.5px">25/01/2017</div>
<div class="t" style="top:380.37px;font-size:10.2px;color:#111;left:546.30px;">ALPHA &amp; BETA COMPUTER</div>
<div class="t" style="top:380.49px;font-size:10.05px;color:#111;left:704.60px;">SALES-HANDPHONES</div>
<div class="t" style="top:380.11px;font-size:10.5px;color:#111;left:864.00px;letter-spacing:0.3px">IV-00101</div>
<div class="t" style="top:380.11px;font-size:10.5px;color:#111;right:123.60px;letter-spacing:0.5px;margin-right:-0.5px">6,000.00</div>
<div class="t" style="top:380.11px;font-size:10.5px;color:#111;right:30.60px;letter-spacing:0.5px;margin-right:-0.5px">360.00</div>
<div class="a" style="left:293.50px;top:393.88px;width:846.30px;height:18.48px;background:#eefdec"></div>
<div class="a" style="left:282.00px;top:393.88px;width:857.80px;height:0.90px;background:#a9a9a9"></div>
<div class="a" style="left:371.85px;top:393.88px;width:0.90px;height:18.48px;background:#a9a9a9"></div>
<div class="a" style="left:458.05px;top:393.88px;width:0.90px;height:18.48px;background:#a9a9a9"></div>
<div class="a" style="left:543.95px;top:393.88px;width:0.90px;height:18.48px;background:#a9a9a9"></div>
<div class="a" style="left:701.85px;top:393.88px;width:0.90px;height:18.48px;background:#a9a9a9"></div>
<div class="a" style="left:861.15px;top:393.88px;width:0.90px;height:18.48px;background:#a9a9a9"></div>
<div class="a" style="left:954.15px;top:393.88px;width:0.90px;height:18.48px;background:#a9a9a9"></div>
<div class="a" style="left:1045.95px;top:393.88px;width:0.90px;height:18.48px;background:#a9a9a9"></div>
<div class="t" style="top:398.59px;font-size:10.5px;color:#111;left:132.90px;width:400px;text-align:center;">ZRL</div>
<div class="t" style="top:398.59px;font-size:10.5px;color:#111;left:374.70px;letter-spacing:0.5px;margin-right:-0.5px">15/01/2017</div>
<div class="t" style="top:398.59px;font-size:10.5px;color:#111;left:460.90px;letter-spacing:0.5px;margin-right:-0.5px">15/01/2017</div>
<div class="t" style="top:398.85px;font-size:10.2px;color:#111;left:546.30px;">ALPHA &amp; BETA COMPUTER</div>
<div class="t" style="top:398.97px;font-size:10.05px;color:#111;left:704.60px;">SALES-HANDPHONES</div>
<div class="t" style="top:398.59px;font-size:10.5px;color:#111;left:864.00px;letter-spacing:0.3px">IV-00100</div>
<div class="t" style="top:398.59px;font-size:10.5px;color:#111;right:123.60px;letter-spacing:0.5px;margin-right:-0.5px">5,000.00</div>
<div class="t" style="top:398.59px;font-size:10.5px;color:#111;right:30.60px;letter-spacing:0.5px;margin-right:-0.5px">0.00</div>
<div class="a" style="left:293.50px;top:412.36px;width:846.30px;height:18.48px;background:#fff"></div>
<div class="a" style="left:282.00px;top:412.36px;width:857.80px;height:0.90px;background:#a9a9a9"></div>
<div class="a" style="left:371.85px;top:412.36px;width:0.90px;height:18.48px;background:#a9a9a9"></div>
<div class="a" style="left:458.05px;top:412.36px;width:0.90px;height:18.48px;background:#a9a9a9"></div>
<div class="a" style="left:543.95px;top:412.36px;width:0.90px;height:18.48px;background:#a9a9a9"></div>
<div class="a" style="left:701.85px;top:412.36px;width:0.90px;height:18.48px;background:#a9a9a9"></div>
<div class="a" style="left:861.15px;top:412.36px;width:0.90px;height:18.48px;background:#a9a9a9"></div>
<div class="a" style="left:954.15px;top:412.36px;width:0.90px;height:18.48px;background:#a9a9a9"></div>
<div class="a" style="left:1045.95px;top:412.36px;width:0.90px;height:18.48px;background:#a9a9a9"></div>
<div class="t" style="top:417.07px;font-size:10.5px;color:#111;left:132.90px;width:400px;text-align:center;">ZRE</div>
<div class="t" style="top:417.07px;font-size:10.5px;color:#111;left:374.70px;letter-spacing:0.5px;margin-right:-0.5px">06/01/2017</div>
<div class="t" style="top:417.07px;font-size:10.5px;color:#111;left:460.90px;letter-spacing:0.5px;margin-right:-0.5px">06/01/2017</div>
<div class="t" style="top:417.33px;font-size:10.2px;color:#111;left:546.30px;">US CORPORATION PE LTD</div>
<div class="t" style="top:417.45px;font-size:10.05px;color:#111;left:704.60px;">SALES-HANDPHONES</div>
<div class="t" style="top:417.07px;font-size:10.5px;color:#111;left:864.00px;letter-spacing:0.3px">IV-00104</div>
<div class="t" style="top:417.07px;font-size:10.5px;color:#111;right:123.60px;letter-spacing:0.5px;margin-right:-0.5px">33,660.00</div>
<div class="t" style="top:417.07px;font-size:10.5px;color:#111;right:30.60px;letter-spacing:0.5px;margin-right:-0.5px">0.00</div>
<div class="a" style="left:293.50px;top:430.84px;width:846.30px;height:18.48px;background:#eefdec"></div>
<div class="a" style="left:282.00px;top:430.84px;width:857.80px;height:0.90px;background:#a9a9a9"></div>
<div class="a" style="left:371.85px;top:430.84px;width:0.90px;height:18.48px;background:#a9a9a9"></div>
<div class="a" style="left:458.05px;top:430.84px;width:0.90px;height:18.48px;background:#a9a9a9"></div>
<div class="a" style="left:543.95px;top:430.84px;width:0.90px;height:18.48px;background:#a9a9a9"></div>
<div class="a" style="left:701.85px;top:430.84px;width:0.90px;height:18.48px;background:#a9a9a9"></div>
<div class="a" style="left:861.15px;top:430.84px;width:0.90px;height:18.48px;background:#a9a9a9"></div>
<div class="a" style="left:954.15px;top:430.84px;width:0.90px;height:18.48px;background:#a9a9a9"></div>
<div class="a" style="left:1045.95px;top:430.84px;width:0.90px;height:18.48px;background:#a9a9a9"></div>
<div class="t" style="top:435.55px;font-size:10.5px;color:#111;left:132.90px;width:400px;text-align:center;">ZRE</div>
<div class="t" style="top:435.55px;font-size:10.5px;color:#111;left:374.70px;letter-spacing:0.5px;margin-right:-0.5px">18/01/2017</div>
<div class="t" style="top:435.55px;font-size:10.5px;color:#111;left:460.90px;letter-spacing:0.5px;margin-right:-0.5px">18/01/2017</div>
<div class="t" style="top:435.81px;font-size:10.2px;color:#111;left:546.30px;">US CORPORATION PE LTD</div>
<div class="t" style="top:435.93px;font-size:10.05px;color:#111;left:704.60px;">SALES-HANDPHONES</div>
<div class="t" style="top:435.55px;font-size:10.5px;color:#111;left:864.00px;letter-spacing:0.3px">IV-00102</div>
<div class="t" style="top:435.55px;font-size:10.5px;color:#111;right:123.60px;letter-spacing:0.5px;margin-right:-0.5px">29,920.00</div>
<div class="t" style="top:435.55px;font-size:10.5px;color:#111;right:30.60px;letter-spacing:0.5px;margin-right:-0.5px">0.00</div>
<div class="a" style="left:293.50px;top:449.32px;width:846.30px;height:18.48px;background:#fff"></div>
<div class="a" style="left:282.00px;top:449.32px;width:857.80px;height:0.90px;background:#a9a9a9"></div>
<div class="a" style="left:371.85px;top:449.32px;width:0.90px;height:18.48px;background:#a9a9a9"></div>
<div class="a" style="left:458.05px;top:449.32px;width:0.90px;height:18.48px;background:#a9a9a9"></div>
<div class="a" style="left:543.95px;top:449.32px;width:0.90px;height:18.48px;background:#a9a9a9"></div>
<div class="a" style="left:701.85px;top:449.32px;width:0.90px;height:18.48px;background:#a9a9a9"></div>
<div class="a" style="left:861.15px;top:449.32px;width:0.90px;height:18.48px;background:#a9a9a9"></div>
<div class="a" style="left:954.15px;top:449.32px;width:0.90px;height:18.48px;background:#a9a9a9"></div>
<div class="a" style="left:1045.95px;top:449.32px;width:0.90px;height:18.48px;background:#a9a9a9"></div>
<div class="t" style="top:454.03px;font-size:10.5px;color:#111;left:132.90px;width:400px;text-align:center;">ZRE</div>
<div class="t" style="top:454.03px;font-size:10.5px;color:#111;left:374.70px;letter-spacing:0.5px;margin-right:-0.5px">18/01/2017</div>
<div class="t" style="top:454.03px;font-size:10.5px;color:#111;left:460.90px;letter-spacing:0.5px;margin-right:-0.5px">18/01/2017</div>
<div class="t" style="top:454.29px;font-size:10.2px;color:#111;left:546.30px;">US CORPORATION PE LTD</div>
<div class="t" style="top:454.41px;font-size:10.05px;color:#111;left:704.60px;">SALES-HANDPHONES</div>
<div class="t" style="top:454.03px;font-size:10.5px;color:#111;left:864.00px;letter-spacing:0.3px">IV-00108</div>
<div class="t" style="top:454.03px;font-size:10.5px;color:#111;right:123.60px;letter-spacing:0.5px;margin-right:-0.5px">935,000.00</div>
<div class="t" style="top:454.03px;font-size:10.5px;color:#111;right:30.60px;letter-spacing:0.5px;margin-right:-0.5px">0.00</div>
<div class="a" style="left:293.50px;top:467.80px;width:846.30px;height:18.48px;background:#eefdec"></div>
<div class="a" style="left:282.00px;top:467.80px;width:857.80px;height:0.90px;background:#a9a9a9"></div>
<div class="a" style="left:371.85px;top:467.80px;width:0.90px;height:18.48px;background:#a9a9a9"></div>
<div class="a" style="left:458.05px;top:467.80px;width:0.90px;height:18.48px;background:#a9a9a9"></div>
<div class="a" style="left:543.95px;top:467.80px;width:0.90px;height:18.48px;background:#a9a9a9"></div>
<div class="a" style="left:701.85px;top:467.80px;width:0.90px;height:18.48px;background:#a9a9a9"></div>
<div class="a" style="left:861.15px;top:467.80px;width:0.90px;height:18.48px;background:#a9a9a9"></div>
<div class="a" style="left:954.15px;top:467.80px;width:0.90px;height:18.48px;background:#a9a9a9"></div>
<div class="a" style="left:1045.95px;top:467.80px;width:0.90px;height:18.48px;background:#a9a9a9"></div>
<div class="t" style="top:472.51px;font-size:10.5px;color:#111;left:132.90px;width:400px;text-align:center;">IES</div>
<div class="t" style="top:472.51px;font-size:10.5px;color:#111;left:374.70px;letter-spacing:0.5px;margin-right:-0.5px">18/01/2017</div>
<div class="t" style="top:472.51px;font-size:10.5px;color:#111;left:460.90px;letter-spacing:0.5px;margin-right:-0.5px">18/01/2017</div>
<div class="t" style="top:472.77px;font-size:10.2px;color:#111;left:546.30px;">US CORPORATION PE LTD</div>
<div class="t" style="top:472.89px;font-size:10.05px;color:#111;left:704.60px;letter-spacing:0.22px">Realised Exchange Gain/Loss</div>
<div class="t" style="top:472.51px;font-size:10.5px;color:#111;left:864.00px;letter-spacing:0.3px">OR-00056</div>
<div class="t" style="top:472.51px;font-size:10.5px;color:#111;right:123.60px;letter-spacing:0.5px;margin-right:-0.5px">1,280.00</div>
<div class="t" style="top:472.51px;font-size:10.5px;color:#111;right:30.60px;letter-spacing:0.5px;margin-right:-0.5px">0.00</div>
<div class="a" style="left:293.50px;top:486.28px;width:846.30px;height:18.48px;background:#fff"></div>
<div class="a" style="left:282.00px;top:486.28px;width:857.80px;height:0.90px;background:#a9a9a9"></div>
<div class="a" style="left:371.85px;top:486.28px;width:0.90px;height:18.48px;background:#a9a9a9"></div>
<div class="a" style="left:458.05px;top:486.28px;width:0.90px;height:18.48px;background:#a9a9a9"></div>
<div class="a" style="left:543.95px;top:486.28px;width:0.90px;height:18.48px;background:#a9a9a9"></div>
<div class="a" style="left:701.85px;top:486.28px;width:0.90px;height:18.48px;background:#a9a9a9"></div>
<div class="a" style="left:861.15px;top:486.28px;width:0.90px;height:18.48px;background:#a9a9a9"></div>
<div class="a" style="left:954.15px;top:486.28px;width:0.90px;height:18.48px;background:#a9a9a9"></div>
<div class="a" style="left:1045.95px;top:486.28px;width:0.90px;height:18.48px;background:#a9a9a9"></div>
<div class="t" style="top:490.99px;font-size:10.5px;color:#111;left:132.90px;width:400px;text-align:center;">IES</div>
<div class="t" style="top:490.99px;font-size:10.5px;color:#111;left:374.70px;letter-spacing:0.5px;margin-right:-0.5px">26/01/2017</div>
<div class="t" style="top:490.99px;font-size:10.5px;color:#111;left:460.90px;letter-spacing:0.5px;margin-right:-0.5px">26/01/2017</div>
<div class="t" style="top:491.25px;font-size:10.2px;color:#111;left:546.30px;"></div>
<div class="t" style="top:491.37px;font-size:10.05px;color:#111;left:704.60px;letter-spacing:0.22px">Realised Exchange Gain/Loss</div>
<div class="t" style="top:490.99px;font-size:10.5px;color:#111;left:864.00px;letter-spacing:0.3px">BA-00002</div>
<div class="t" style="top:490.99px;font-size:10.5px;color:#111;right:123.60px;letter-spacing:0.5px;margin-right:-0.5px">5,360.00</div>
<div class="t" style="top:490.99px;font-size:10.5px;color:#111;right:30.60px;letter-spacing:0.5px;margin-right:-0.5px">0.00</div>
<div class="a" style="left:293.50px;top:504.76px;width:846.30px;height:18.48px;background:#eefdec"></div>
<div class="a" style="left:282.00px;top:504.76px;width:857.80px;height:0.90px;background:#a9a9a9"></div>
<div class="a" style="left:371.85px;top:504.76px;width:0.90px;height:18.48px;background:#a9a9a9"></div>
<div class="a" style="left:458.05px;top:504.76px;width:0.90px;height:18.48px;background:#a9a9a9"></div>
<div class="a" style="left:543.95px;top:504.76px;width:0.90px;height:18.48px;background:#a9a9a9"></div>
<div class="a" style="left:701.85px;top:504.76px;width:0.90px;height:18.48px;background:#a9a9a9"></div>
<div class="a" style="left:861.15px;top:504.76px;width:0.90px;height:18.48px;background:#a9a9a9"></div>
<div class="a" style="left:954.15px;top:504.76px;width:0.90px;height:18.48px;background:#a9a9a9"></div>
<div class="a" style="left:1045.95px;top:504.76px;width:0.90px;height:18.48px;background:#a9a9a9"></div>
<div class="t" style="top:509.47px;font-size:10.5px;color:#111;left:132.90px;width:400px;text-align:center;">DS</div>
<div class="t" style="top:509.47px;font-size:10.5px;color:#111;left:374.70px;letter-spacing:0.5px;margin-right:-0.5px">17/01/2017</div>
<div class="t" style="top:509.47px;font-size:10.5px;color:#111;left:460.90px;letter-spacing:0.5px;margin-right:-0.5px">17/01/2017</div>
<div class="t" style="top:509.73px;font-size:10.2px;color:#111;left:546.30px;">CELCOM (M) COMMUNICATIO...</div>
<div class="t" style="top:509.85px;font-size:10.05px;color:#111;left:704.60px;">PURCHASE-PREPAID</div>
<div class="t" style="top:509.47px;font-size:10.5px;color:#111;left:864.00px;letter-spacing:0.3px">PI-00039</div>
<div class="t" style="top:509.47px;font-size:10.5px;color:#111;right:123.60px;letter-spacing:0.5px;margin-right:-0.5px">35,000.00</div>
<div class="t" style="top:509.47px;font-size:10.5px;color:#111;right:30.60px;letter-spacing:0.5px;margin-right:-0.5px">2,100.00</div>
<div class="a" style="left:293.50px;top:523.24px;width:846.30px;height:18.48px;background:#fff"></div>
<div class="a" style="left:282.00px;top:523.24px;width:857.80px;height:0.90px;background:#a9a9a9"></div>
<div class="a" style="left:371.85px;top:523.24px;width:0.90px;height:18.48px;background:#a9a9a9"></div>
<div class="a" style="left:458.05px;top:523.24px;width:0.90px;height:18.48px;background:#a9a9a9"></div>
<div class="a" style="left:543.95px;top:523.24px;width:0.90px;height:18.48px;background:#a9a9a9"></div>
<div class="a" style="left:701.85px;top:523.24px;width:0.90px;height:18.48px;background:#a9a9a9"></div>
<div class="a" style="left:861.15px;top:523.24px;width:0.90px;height:18.48px;background:#a9a9a9"></div>
<div class="a" style="left:954.15px;top:523.24px;width:0.90px;height:18.48px;background:#a9a9a9"></div>
<div class="a" style="left:1045.95px;top:523.24px;width:0.90px;height:18.48px;background:#a9a9a9"></div>
<div class="t" style="top:527.95px;font-size:10.5px;color:#111;left:132.90px;width:400px;text-align:center;">OS</div>
<div class="t" style="top:527.95px;font-size:10.5px;color:#111;left:374.70px;letter-spacing:0.5px;margin-right:-0.5px">25/01/2017</div>
<div class="t" style="top:527.95px;font-size:10.5px;color:#111;left:460.90px;letter-spacing:0.5px;margin-right:-0.5px">25/01/2017</div>
<div class="t" style="top:528.21px;font-size:10.2px;color:#111;left:546.30px;"></div>
<div class="t" style="top:528.33px;font-size:10.05px;color:#111;left:704.60px;"></div>
<div class="t" style="top:527.95px;font-size:10.5px;color:#111;left:864.00px;letter-spacing:0.3px">JV-00004</div>
<div class="t" style="top:527.95px;font-size:10.5px;color:#111;right:123.60px;letter-spacing:0.5px;margin-right:-0.5px">15,500.00</div>
<div class="t" style="top:527.95px;font-size:10.5px;color:#111;right:30.60px;letter-spacing:0.5px;margin-right:-0.5px">0.00</div>
<div class="a" style="left:293.50px;top:541.72px;width:846.30px;height:18.48px;background:#eefdec"></div>
<div class="a" style="left:282.00px;top:541.72px;width:857.80px;height:0.90px;background:#a9a9a9"></div>
<div class="a" style="left:371.85px;top:541.72px;width:0.90px;height:18.48px;background:#a9a9a9"></div>
<div class="a" style="left:458.05px;top:541.72px;width:0.90px;height:18.48px;background:#a9a9a9"></div>
<div class="a" style="left:543.95px;top:541.72px;width:0.90px;height:18.48px;background:#a9a9a9"></div>
<div class="a" style="left:701.85px;top:541.72px;width:0.90px;height:18.48px;background:#a9a9a9"></div>
<div class="a" style="left:861.15px;top:541.72px;width:0.90px;height:18.48px;background:#a9a9a9"></div>
<div class="a" style="left:954.15px;top:541.72px;width:0.90px;height:18.48px;background:#a9a9a9"></div>
<div class="a" style="left:1045.95px;top:541.72px;width:0.90px;height:18.48px;background:#a9a9a9"></div>
<div class="t" style="top:546.43px;font-size:10.5px;color:#111;left:132.90px;width:400px;text-align:center;">TX</div>
<div class="t" style="top:546.43px;font-size:10.5px;color:#111;left:374.70px;letter-spacing:0.5px;margin-right:-0.5px">05/01/2017</div>
<div class="t" style="top:546.43px;font-size:10.5px;color:#111;left:460.90px;letter-spacing:0.5px;margin-right:-0.5px">05/01/2017</div>
<div class="t" style="top:546.69px;font-size:10.2px;color:#111;left:546.30px;">CELCOM (M) COMMUNICATIO...</div>
<div class="t" style="top:546.81px;font-size:10.05px;color:#111;left:704.60px;">UPKEEP OF MOTOR VEHICLE ...</div>
<div class="t" style="top:546.43px;font-size:10.5px;color:#111;left:864.00px;letter-spacing:0.3px">PI-00029</div>
<div class="t" style="top:546.43px;font-size:10.5px;color:#111;right:123.60px;letter-spacing:0.5px;margin-right:-0.5px">150.00</div>
<div class="t" style="top:546.43px;font-size:10.5px;color:#111;right:30.60px;letter-spacing:0.5px;margin-right:-0.5px">9.00</div>
<div class="a" style="left:293.50px;top:560.20px;width:846.30px;height:18.48px;background:#fff"></div>
<div class="a" style="left:282.00px;top:560.20px;width:857.80px;height:0.90px;background:#a9a9a9"></div>
<div class="a" style="left:371.85px;top:560.20px;width:0.90px;height:18.48px;background:#a9a9a9"></div>
<div class="a" style="left:458.05px;top:560.20px;width:0.90px;height:18.48px;background:#a9a9a9"></div>
<div class="a" style="left:543.95px;top:560.20px;width:0.90px;height:18.48px;background:#a9a9a9"></div>
<div class="a" style="left:701.85px;top:560.20px;width:0.90px;height:18.48px;background:#a9a9a9"></div>
<div class="a" style="left:861.15px;top:560.20px;width:0.90px;height:18.48px;background:#a9a9a9"></div>
<div class="a" style="left:954.15px;top:560.20px;width:0.90px;height:18.48px;background:#a9a9a9"></div>
<div class="a" style="left:1045.95px;top:560.20px;width:0.90px;height:18.48px;background:#a9a9a9"></div>
<div class="t" style="top:564.91px;font-size:10.5px;color:#111;left:132.90px;width:400px;text-align:center;">TX</div>
<div class="t" style="top:564.91px;font-size:10.5px;color:#111;left:374.70px;letter-spacing:0.5px;margin-right:-0.5px">17/01/2017</div>
<div class="t" style="top:564.91px;font-size:10.5px;color:#111;left:460.90px;letter-spacing:0.5px;margin-right:-0.5px">17/01/2017</div>
<div class="t" style="top:565.17px;font-size:10.2px;color:#111;left:546.30px;">CELCOM (M) COMMUNICATIO...</div>
<div class="t" style="top:565.29px;font-size:10.05px;color:#111;left:704.60px;letter-spacing:0.22px">LAND &amp; BUILDING</div>
<div class="t" style="top:564.91px;font-size:10.5px;color:#111;left:864.00px;letter-spacing:0.3px">PI-00039</div>
<div class="t" style="top:564.91px;font-size:10.5px;color:#111;right:123.60px;letter-spacing:0.5px;margin-right:-0.5px">65,000.00</div>
<div class="t" style="top:564.91px;font-size:10.5px;color:#111;right:30.60px;letter-spacing:0.5px;margin-right:-0.5px">3,900.00</div>
<div class="a" style="left:293.10px;top:283.00px;width:0.90px;height:295.00px;background:#b0b0b0"></div>
<div class="a" style="left:285.5px;top:288px;width:0;height:0;border-top:4px solid transparent;border-bottom:4px solid transparent;border-left:5px solid #111"></div>
<div class="a" style="left:282.00px;top:577.40px;width:857.80px;height:1.40px;background:#a0a0a0"></div>
<div class="a" style="left:282.00px;top:578.80px;width:857.80px;height:20.20px;background:#f0f0f0"></div>
<div class="a" style="left:293.10px;top:578.80px;width:0.90px;height:20.20px;background:#c8c8c8"></div>
<div class="a" style="left:373.40px;top:580.40px;width:84.60px;height:17.60px;background:#e7e7e8;border:1px solid #d9d9d9"></div>
<div class="a" style="left:956.00px;top:580.40px;width:90.40px;height:17.60px;background:#e7e7e8;border:1px solid #d9d9d9"></div>
<div class="a" style="left:1048.00px;top:580.40px;width:90.50px;height:17.60px;background:#e7e7e8;border:1px solid #d9d9d9"></div>
<div class="t" style="top:584.61px;font-size:10.5px;color:#111;left:376.00px;letter-spacing:0.6px">Count = 24</div>
<div class="a" style="left:1048px;top:580px;width:90.5px;height:18px;overflow:hidden"><div class="t" style="right:1px;top:4.51px;font-size:10.5px;letter-spacing:0.5px;margin-right:-0.5px;color:#111">Claimable: 222.60</div></div>
</body></html>
